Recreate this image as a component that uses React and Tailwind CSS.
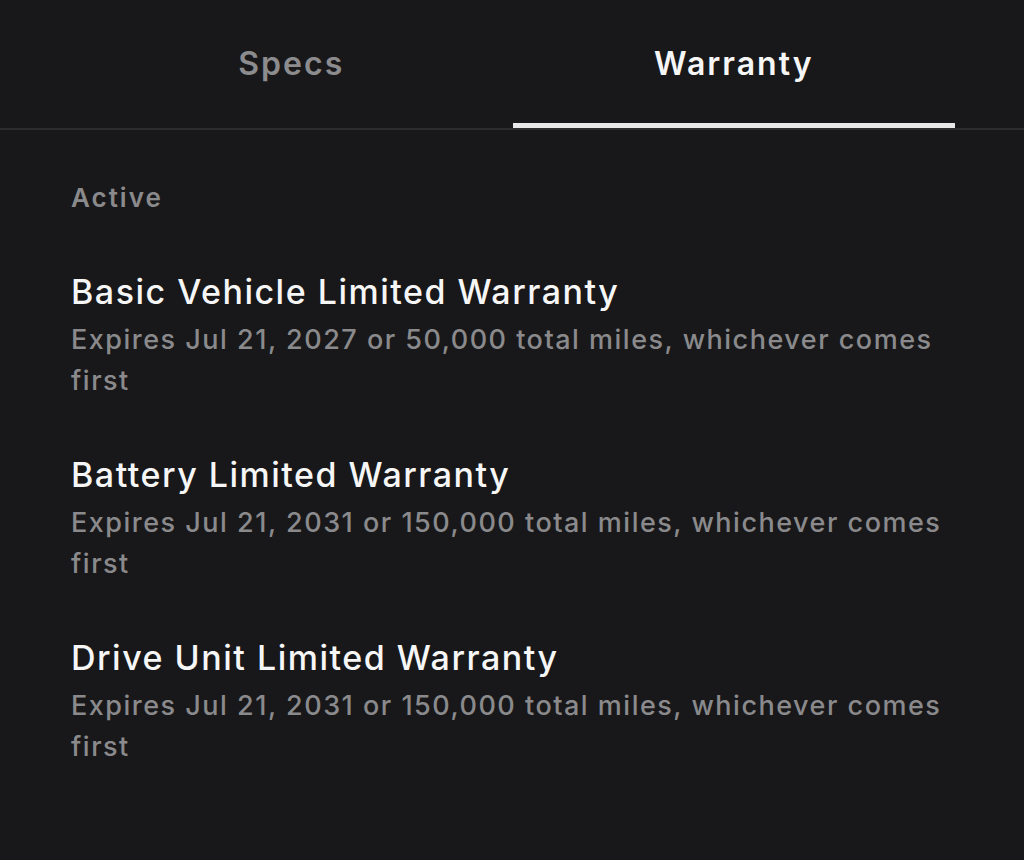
import { useState } from "react";

const warranties = [
  {
    title: "Basic Vehicle Limited Warranty",
    detail: "Expires Jul 21, 2027 or 50,000 total miles, whichever comes first",
  },
  {
    title: "Battery Limited Warranty",
    detail: "Expires Jul 21, 2031 or 150,000 total miles, whichever comes first",
  },
  {
    title: "Drive Unit Limited Warranty",
    detail: "Expires Jul 21, 2031 or 150,000 total miles, whichever comes first",
  },
];

export default function App() {
  const [tab, setTab] = useState("Warranty");

  return (
    <div
      className="min-h-[860px] w-full bg-[#18181a] text-white"
      style={{ fontFamily: "Inter, 'Noto Sans', sans-serif" }}
    >
      {/* Tabs */}
      <div className="border-b-2 border-[#2c2c2e]">
        <div className="flex pl-[70px] pr-[69px]">
          {["Specs", "Warranty"].map((name) => (
            <button
              key={name}
              onClick={() => setTab(name)}
              className={`flex-1 h-[128px] flex items-center justify-center border-b-[5px] pt-[5px] text-[32px] font-semibold tracking-[2px] ${
                tab === name
                  ? "border-[#e8e8e8] text-[#f6f6f6]"
                  : "border-transparent text-[#8c8c8e]"
              }`}
            >
              {name}
            </button>
          ))}
        </div>
      </div>

      <div className="px-[71px] pt-[50px]">
        <p className="text-[26px] leading-[36px] font-semibold tracking-[2px] text-[#8a8a8c]">
          Active
        </p>

        <div className="mt-[54px] flex flex-col gap-[52px]">
          {warranties.map((w) => (
            <div key={w.title}>
              <h3 className="text-[34px] leading-[44px] font-medium tracking-[1.5px] text-[#f6f6f6]">
                {w.title}
              </h3>
              <p className="mt-[5px] text-[27px] leading-[41px] font-medium tracking-[1.5px] text-[#8a8a8c]">
                {w.detail}
              </p>
            </div>
          ))}
        </div>
      </div>
    </div>
  );
}
